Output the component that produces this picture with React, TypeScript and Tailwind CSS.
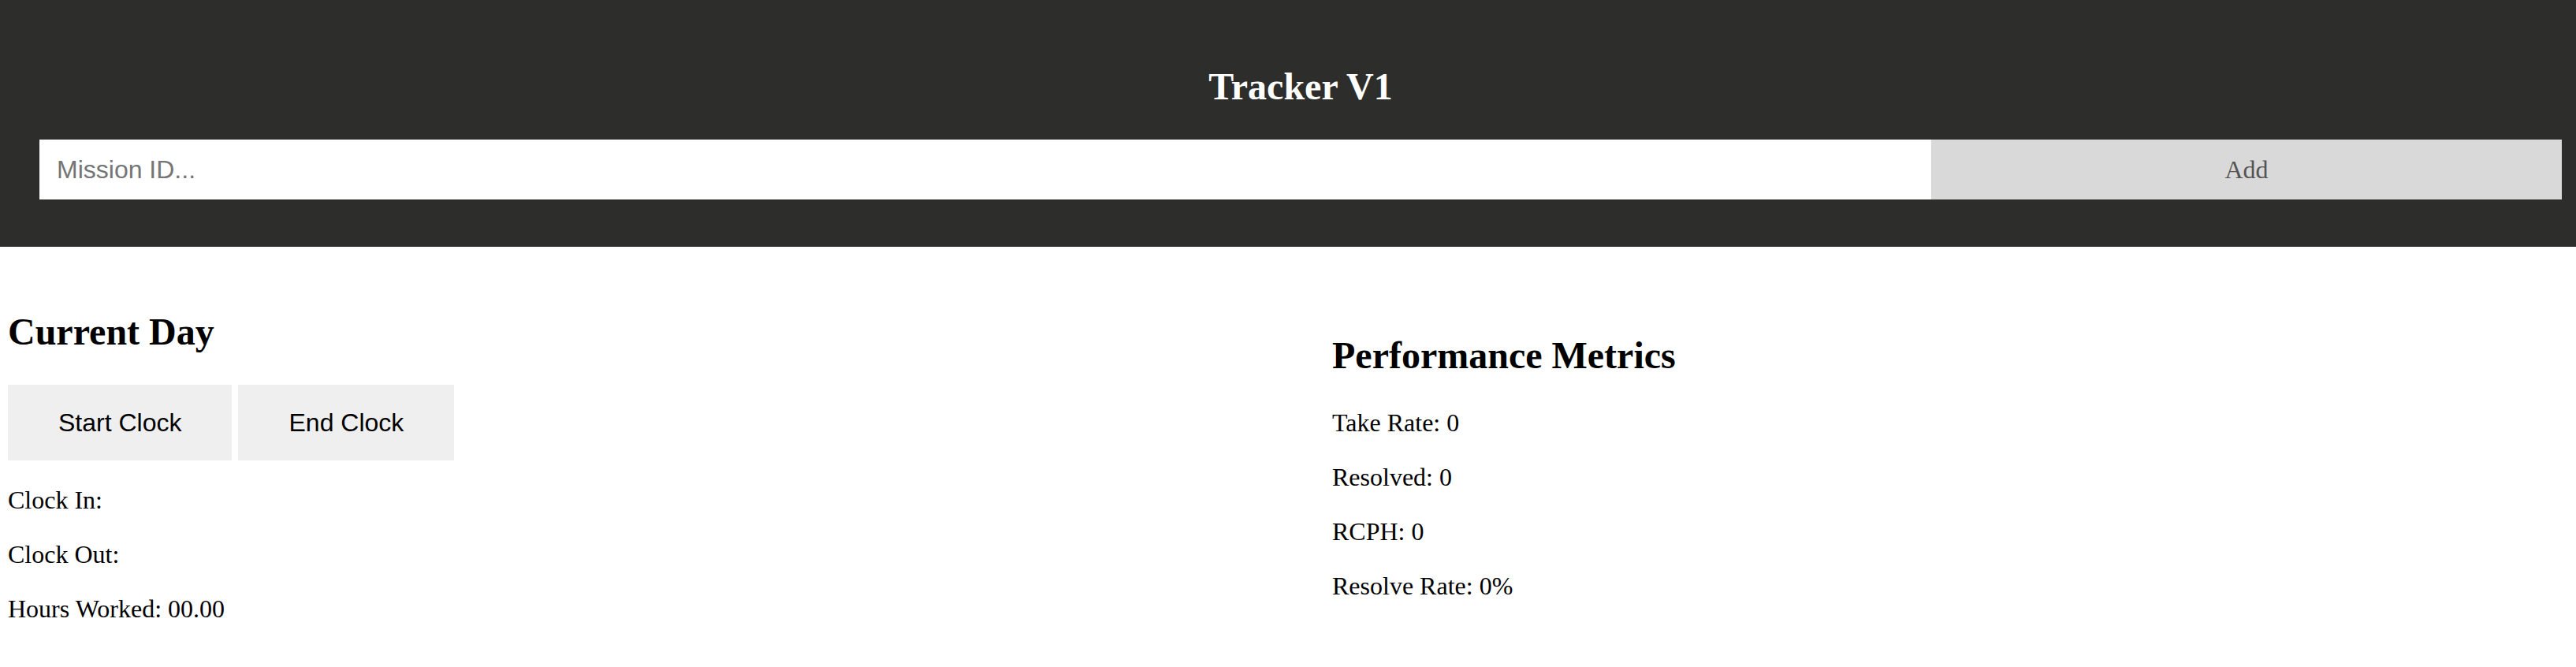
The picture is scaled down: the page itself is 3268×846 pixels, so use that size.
import React from "react";

export default function App() {
  return (
    <div className="min-h-screen bg-white text-black font-['Liberation_Serif',serif] text-[32px]">
      <header className="bg-[#2d2e2b] pl-[50px] pr-[18px] pt-[82px] pb-[60px]">
        <h1 className="text-center text-white font-bold text-[48px] leading-[55px] mb-[40px]">
          Tracker V1
        </h1>
        <div className="flex h-[76px]">
          <input
            type="text"
            placeholder="Mission ID..."
            className="w-[2400px] shrink-0 bg-white px-[22px] font-['Liberation_Sans',sans-serif] text-[32px] text-black placeholder:text-[#757575] outline-none border-0"
          />
          <button className="w-[800px] shrink-0 bg-[#d9d9d9] text-[#545454] font-['Liberation_Serif',serif] text-[32px]">
            Add
          </button>
        </div>
      </header>
      <main className="flex items-center">
        <section className="w-[1690px] shrink-0 pl-[10px] pt-[80px] pb-[32px] flex flex-col items-start">
          <h2 className="font-bold text-[48px] leading-[55px]">Current Day</h2>
          <div className="mt-[40px] flex gap-[8px]">
            <button className="h-[96px] px-[64px] bg-[#efefef] font-['Liberation_Sans',sans-serif] text-[32px] leading-[37px] text-black">
              Start Clock
            </button>
            <button className="h-[96px] px-[64px] bg-[#efefef] font-['Liberation_Sans',sans-serif] text-[32px] leading-[37px] text-black">
              End Clock
            </button>
          </div>
          <p className="mt-[32px] leading-[37px]">Clock In:</p>
          <p className="mt-[32px] leading-[37px]">Clock Out:</p>
          <p className="mt-[32px] leading-[37px]">Hours Worked: 00.00</p>
        </section>
        <section className="flex-1 pt-[80px] pb-[32px] flex flex-col items-start">
          <h2 className="font-bold text-[48px] leading-[55px]">Performance Metrics</h2>
          <p className="mt-[40px] leading-[37px]">Take Rate: 0</p>
          <p className="mt-[32px] leading-[37px]">Resolved: 0</p>
          <p className="mt-[32px] leading-[37px]">RCPH: 0</p>
          <p className="mt-[32px] leading-[37px]">Resolve Rate: 0%</p>
        </section>
      </main>
    </div>
  );
}
